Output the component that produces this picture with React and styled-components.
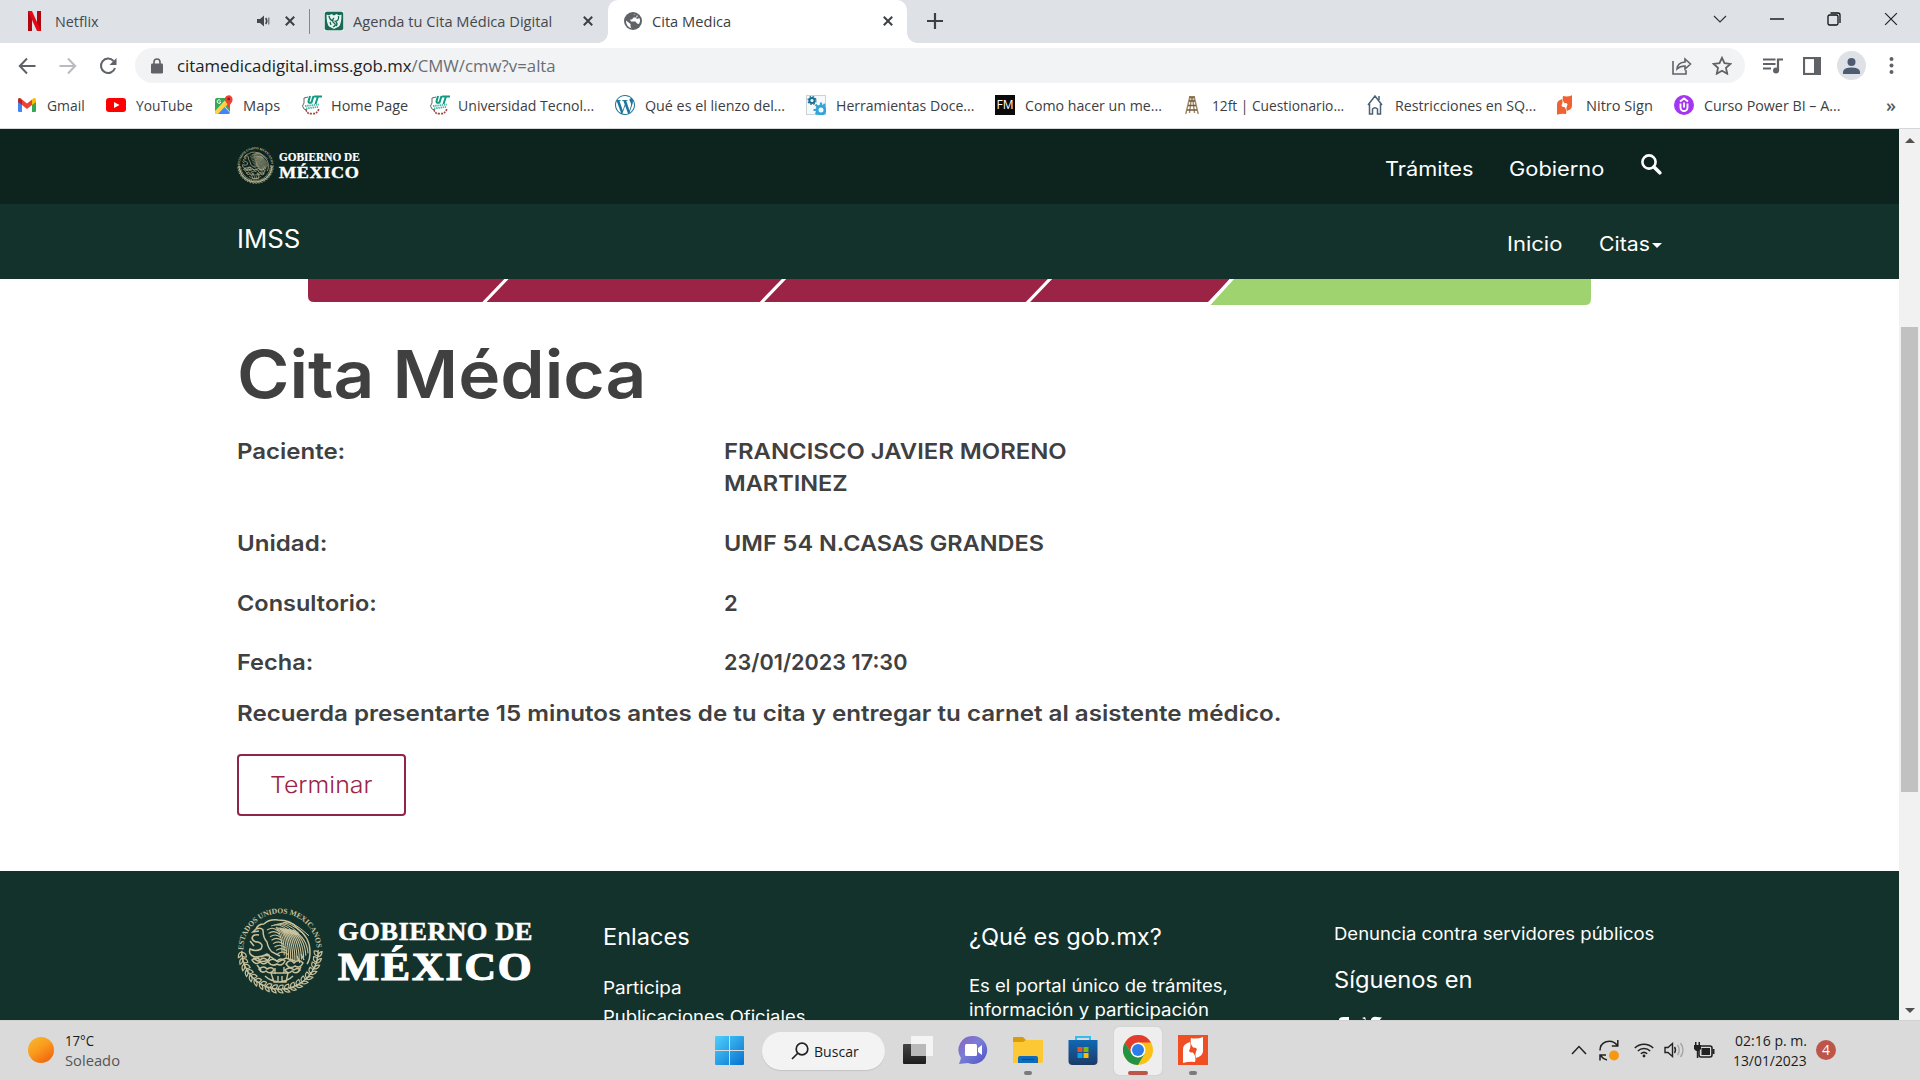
import React, { useLayoutEffect, useRef, useState } from 'react';
import styled, { createGlobalStyle } from 'styled-components';
import { SiWordpress } from 'react-icons/si';

const UI = '"Open Sans", "Noto Sans", sans-serif';
const BODY = 'Inter, "Open Sans", sans-serif';
const SERIF = '"Liberation Serif", serif';

const GlobalStyle = createGlobalStyle`
  * { box-sizing: border-box; }
  body { margin: 0; overflow: hidden; background: #fff; font-family: ${BODY}; }
  svg { display: block; flex: none; }
`;

/* ---------- text that fills a given measure ---------- */
const Measure = styled.span`
  display: block;
  flex: none;
  width: ${(p) => p.$w}px;
  margin-left: ${(p) => p.$ml || 0}px;
  white-space: nowrap;
`;
const Run = styled.span`
  display: block;
  width: max-content;
  transform-origin: 0 50%;
`;
function Fit({ w, ml, children }) {
  const ref = useRef(null);
  const [k, setK] = useState(1);
  useLayoutEffect(() => {
    setK(w / ref.current.offsetWidth);
  }, [w]);
  return (
    <Measure $w={w} $ml={ml}>
      <Run ref={ref} style={{ transform: `scaleX(${k})` }}>{children}</Run>
    </Measure>
  );
}

/* ---------- window ---------- */
const Screen = styled.div`
  width: 1920px;
  height: 1080px;
  display: flex;
  flex-direction: column;
  overflow: hidden;
`;
const Slot = styled.span`
  display: flex;
  flex: none;
  margin-left: ${(p) => p.$ml || 0}px;
`;

/* ---------- tab strip ---------- */
const TabStrip = styled.div`
  height: 43px;
  flex: none;
  display: flex;
  background: #dee1e6;
  font: 15px/41px ${UI};
  color: #45494d;
`;
const Tab = styled.div`
  width: ${(p) => p.$w}px;
  height: 43px;
  display: flex;
  align-items: center;
  padding: 0 0 1px ${(p) => p.$pl}px;
`;
const ActiveTab = styled(Tab)`
  position: relative;
  background: #fff;
  border-radius: 10px 10px 0 0;
  color: #3c4043;
  &::before, &::after {
    content: '';
    position: absolute;
    bottom: 0;
    width: 10px;
    height: 10px;
  }
  &::before { left: -10px; background: radial-gradient(circle at 0 0, transparent 9.5px, #fff 10px); }
  &::after { right: -10px; background: radial-gradient(circle at 100% 0, transparent 9.5px, #fff 10px); }
`;
const TabDivider = styled.i`
  width: 1px;
  height: 25px;
  margin-left: 14px;
  background: #85888c;
`;
const WindowButtons = styled.div`
  display: flex;
  align-items: center;
  height: 37px;
  margin-left: auto;
  padding-right: 22px;
  gap: 43px;
`;

/* ---------- toolbar ---------- */
const Toolbar = styled.div`
  height: 45px;
  flex: none;
  display: flex;
  align-items: center;
  padding: 0 0 0 18px;
  background: #fff;
`;
const Omnibox = styled.div`
  width: 1610px;
  height: 35px;
  margin-left: 18px;
  border-radius: 18px;
  background: #f1f3f4;
  display: flex;
  align-items: center;
  padding-left: 16px;
  font: 17px/35px ${UI};
  color: #202124;
`;
const UrlPath = styled.span`color: #6a6e73;`;
const Avatar = styled.span`
  width: 29px;
  height: 29px;
  margin-left: 16px;
  border-radius: 50%;
  background: #dee1e6;
  display: grid;
  place-items: center;
`;
const Bookmarks = styled.div`
  height: 41px;
  flex: none;
  display: flex;
  align-items: center;
  padding: 0 0 6px 18px;
  background: #fff;
  border-bottom: 1px solid #d4d7da;
  font: 15px/23px ${UI};
  color: #3c4043;
`;
const Bookmark = styled.div`
  display: flex;
  flex: none;
  align-items: center;
  width: ${(p) => p.$w}px;
`;
const BookmarkIcon = styled.span`
  width: ${(p) => p.$w || 30}px;
  flex: none;
  display: flex;
`;
const FmBadge = styled.span`
  width: 20px;
  height: 20px;
  background: #0b0b0b;
  color: #fff;
  display: grid;
  place-items: center;
  font: 500 12px/20px ${UI};
`;
const Overflow = styled.span`
  margin-left: 19px;
  font: 600 18px/20px ${UI};
  color: #55595e;
`;

/* ---------- page ---------- */
const Viewport = styled.div`
  height: 891px;
  flex: none;
  display: flex;
  overflow: hidden;
`;
const Page = styled.div`
  width: 1899px;
  display: flex;
  flex-direction: column;
`;
const Band = styled.div`
  height: 75px;
  flex: none;
  display: flex;
  padding: 0 237px 0 237px;
  background: ${(p) => p.$bg};
  color: #fff;
`;
const HeaderLogo = styled.div`
  display: flex;
  gap: 5px;
  margin-top: 18px;
`;
const HeaderWords = styled.div`
  font: bold 12px/13px ${SERIF};
  padding-top: 4px;
  -webkit-text-stroke: 0.2px #fff;
  > :last-child { font-size: 17.5px; line-height: 20px; margin-top: -2px; letter-spacing: 0.6px; -webkit-text-stroke: 0.4px #fff; }
`;
const SiteName = styled.div`
  font: 400 25px/71px ${BODY};
`;
const Nav = styled.nav`
  display: flex;
  margin-left: auto;
  font: 400 20px/81px ${BODY};
`;
const SearchSlot = styled.span`
  padding-top: 25px;
  margin-left: 37px;
`;
const Caret = styled.i`
  width: 0;
  height: 0;
  margin: 39px 0 0 2px;
  border: 5px solid transparent;
  border-top-color: #fff;
  border-bottom: 0;
`;
const Steps = styled.div`
  height: 26px;
  margin-left: 308px;
`;
const Content = styled.main`
  height: 566px;
  flex: none;
  padding: 29px 0 0 237px;
  color: #404041;
  font: 560 22px/32px ${BODY};
`;
const Title = styled.h1`
  margin: 0 0 21px;
  font: 580 66px/80px ${BODY};
`;
const DataRow = styled.div`
  display: grid;
  grid-template-columns: 487px 1fr;
  margin-bottom: ${(p) => p.$gap}px;
`;
const EndButton = styled.button`
  width: 169px;
  height: 62px;
  margin-top: 25px;
  padding: 0 0 0 31px;
  border: 2px solid #8f2547;
  border-radius: 4px;
  background: #fff;
  color: #9d2449;
  font: 300 22.5px/58px ${BODY};
  text-align: left;
`;
const Footer = styled.footer`
  height: 149px;
  flex: none;
  display: flex;
  overflow: hidden;
  padding-left: 237px;
  background: #13322b;
  color: #fff;
`;
const FooterLogo = styled.div`
  width: 366px;
  display: flex;
  padding-top: 37px;
  gap: 15px;
`;
const FooterWords = styled.div`
  padding-top: 12px;
  font: bold 25px/24px ${SERIF};
  letter-spacing: 0.5px;
  -webkit-text-stroke: 0.5px #fff;
  > :last-child { font-size: 40px; line-height: 42px; margin-top: 2px; letter-spacing: 1.8px; -webkit-text-stroke: 1.2px #fff; }
`;
const FooterColumn = styled.div`
  width: ${(p) => p.$w}px;
  padding-top: ${(p) => p.$top}px;
`;
const FooterHeading = styled.div`
  padding-top: ${(p) => p.$pt || 0}px;
  font: 400 22.5px/30px ${BODY};
  margin-bottom: ${(p) => p.$mb || 0}px;
`;
const FooterText = styled.div`
  font: 400 17px/${(p) => p.$lh}px ${BODY};
`;
const Social = styled.div`
  padding-top: 21px;
`;
const Scrollbar = styled.div`
  width: 21px;
  height: 891px;
  background: #f1f1f1;
  display: flex;
  flex-direction: column;
  align-items: center;
  padding-top: 9px;
`;
const ScrollThumb = styled.div`
  width: 17px;
  height: 465px;
  margin-top: 184px;
  background: #c1c1c1;
`;
const ScrollArrow = styled.i`
  width: 0;
  height: 0;
  border: 5px solid transparent;
  ${(p) => (p.$up ? 'border-top: 0; border-bottom-color: #505050;' : 'border-bottom: 0; border-top-color: #505050; margin-top: 216px;')}
`;

/* ---------- taskbar ---------- */
const Taskbar = styled.div`
  height: 60px;
  flex: none;
  display: flex;
  align-items: center;
  background: #dadada;
  border-top: 1px solid #d2d2d2;
  color: #1b1b1b;
  font: 15px/20px ${UI};
`;
const Weather = styled.div`
  width: 715px;
  padding: 0 0 1px 28px;
  display: flex;
  align-items: center;
  gap: 11px;
`;
const Sun = styled.i`
  width: 26px;
  height: 26px;
  border-radius: 50%;
  background: linear-gradient(145deg, #f6b52d 10%, #fa9a1d 45%, #f0640d 90%);
`;
const Condition = styled.div`color: #555;`;
const Search = styled.div`
  width: 123px;
  height: 38px;
  margin-left: 18px;
  padding-left: 29px;
  border-radius: 19px;
  background: #f3f3f3;
  box-shadow: 0 1px 1px #c4c4c4;
  display: flex;
  align-items: center;
  gap: 5px;
`;
const Apps = styled.div`
  display: flex;
  margin-left: 9px;
  gap: 7px;
`;
const TaskApp = styled.div`
  width: 48px;
  height: 48px;
  border-radius: 5px;
  display: flex;
  flex-direction: column;
  align-items: center;
  padding-top: 8px;
  background: ${(p) => (p.$active ? '#eeeeee' : 'transparent')};
  box-shadow: ${(p) => (p.$active ? '0 0 1px #aaa' : 'none')};
`;
const Running = styled.i`
  width: ${(p) => (p.$active ? 20 : 8)}px;
  height: 4px;
  margin-top: 6px;
  border-radius: 2px;
  background: ${(p) => (p.$active ? '#bd5548' : '#7b7b7b')};
`;
const Tray = styled.div`
  display: flex;
  align-items: center;
  margin-left: auto;
  padding: 0 84px 1px 0;
`;
const Clock = styled.div`
  margin-left: 18px;
  width: 74px;
  display: flex;
  flex-direction: column;
  align-items: flex-end;
`;
const Badge = styled.span`
  width: 20px;
  height: 20px;
  margin-left: 9px;
  border-radius: 50%;
  background: #bd5548;
  color: #fff;
  font: 14px/20px ${UI};
  text-align: center;
`;

/* ---------- drawings ---------- */
const CloseX = ({ s = 10, c = '#3c4043', t = 2 }) => (
  <svg width={s} height={s} viewBox="0 0 10 10"><path d="M.8.8l8.4 8.4M9.2.8L.8 9.2" stroke={c} strokeWidth={(t * 10) / s} /></svg>
);
const NetflixN = () => (
  <svg width="13" height="20" viewBox="0 0 13 20">
    <path d="M0 0h4v20H0zM9 0h4v20H9z" fill="#b1060f" />
    <path d="M0 0h4l9 20H9z" fill="#e50914" />
  </svg>
);
const Speaker = () => (
  <svg width="13" height="12" viewBox="0 0 13 12">
    <path d="M0 4h3l4-3.500v11L3 8H0z" fill="#45494d" />
    <path d="M8.700 3q2.200 3 0 6" stroke="#45494d" strokeWidth="1.600" fill="none" /><path d="M11.800 2.500v7" stroke="#6b6e72" strokeWidth="1.200" />
  </svg>
);
const ImssIcon = () => (
  <svg width="20" height="20" viewBox="0 0 20 20">
    <rect width="20" height="20" fill="#e4efeb" /><rect x=".8" y=".8" width="18.400" height="18.400" rx="2" fill="#176a55" />
    <path d="M2.500 3.500q3 1.500 5-.5l2.500 1.500L12.500 3q2 2 5 .5 0 9-2.500 12l-5 2.500-5-2.500q-2.500-3-2.500-12z" fill="#e8f3ef" />
    <path d="M5 5q1 5 4.500 4.500M14.500 5q1 5-4 5.500M10 7q-3 3 0 5t-1 4M12 11q2 2 0 4M6 11l1 3" stroke="#176a55" strokeWidth="1.300" fill="none" />
  </svg>
);
const Globe = () => (
  <svg width="18" height="18" viewBox="0 0 18 18">
    <circle cx="9" cy="9" r="9" fill="#5f6368" />
    <path d="M2 8.500l4.500 3.500v2q0 2 1.500 2.500A7.500 7.500 0 0 1 2 8.500zM8 3q3-1.500 5 .5l-1 2H9.500L8 7.500H6l1 2h4.500l1.500 2 2 .5q2-3 .5-6L13 7l-1-1 2-2q-3-3-6-1z" fill="#fff" />
  </svg>
);
const Lock = () => (
  <svg width="12" height="16" viewBox="0 0 12 16">
    <rect y="5.500" width="12" height="10" rx="1.300" fill="#5f6368" /><path d="M3 6.500V4a3 3 0 0 1 6 0v2.500" fill="none" stroke="#5f6368" strokeWidth="1.600" />
  </svg>
);
const ForwardSvg = styled.svg`transform: scaleX(-1);`;
const arrowPath = 'M17.500 9H2.500M9 1.500L1.800 9 9 16.500';
const BackArrow = () => (
  <svg width="18" height="18" viewBox="0 0 18 18"><path d={arrowPath} fill="none" stroke="#5f6368" strokeWidth="2" /></svg>
);
const ForwardArrow = () => (
  <ForwardSvg width="18" height="18" viewBox="0 0 18 18"><path d={arrowPath} fill="none" stroke="#b9bbbe" strokeWidth="2" /></ForwardSvg>
);
const Reload = () => (
  <svg width="18" height="18" viewBox="0 0 18 18">
    <path d="M14.500 4A7.200 7.200 0 1 0 16 11" fill="none" stroke="#5f6368" strokeWidth="2" /><path d="M17.500 1v7h-7z" fill="#5f6368" />
  </svg>
);
const Share = () => (
  <svg width="20" height="18" viewBox="0 0 20 18" fill="none" stroke="#5f6368" strokeWidth="1.600">
    <path d="M1 4v13h13v-4" /><path d="M5 12q.5-6.500 8-7V2l5.500 5L13 12V9q-5 0-8 3z" />
  </svg>
);
const Star = () => (
  <svg width="20" height="19" viewBox="0 0 20 19"><path d="M10 1.800l2.500 5.400 5.900.7-4.400 4 1.200 5.800L10 14.800l-5.200 2.900L6 11.900l-4.400-4 5.900-.7z" fill="none" stroke="#5f6368" strokeWidth="1.800" /></svg>
);
const Queue = () => (
  <svg width="20" height="16" viewBox="0 0 20 16">
    <path d="M0 1.500h12.500M0 6h12.500M0 10.500h8" stroke="#5f6368" strokeWidth="2" /><circle cx="13" cy="12.500" r="3" fill="#5f6368" />
    <path d="M15 13V1.500h5" stroke="#5f6368" strokeWidth="2.200" fill="none" />
  </svg>
);
const Panel = () => (
  <svg width="18" height="18" viewBox="0 0 18 18"><rect x="1" y="1" width="16" height="16" fill="none" stroke="#5f6368" strokeWidth="2.200" /><path d="M11 1h6v16h-6z" fill="#5f6368" /></svg>
);
const Gmail = () => (
  <svg width="18" height="14" viewBox="0 0 18 14">
    <path d="M0 2v11q0 1 1 1h3V4.500z" fill="#4285f4" /><path d="M18 2v11q0 1-1 1h-3V4.500z" fill="#34a853" />
    <path d="M4 1.500l5 4 5-4V7l-5 4-5-4z" fill="#ea4335" /><path d="M0 2Q0-1 3 .5l1 1V7L0 4z" fill="#c5221f" /><path d="M18 2q0-3-3-1.500l-1 1V7l4-3z" fill="#fbbc04" />
  </svg>
);
const YouTube = () => (
  <svg width="20" height="14" viewBox="0 0 20 14"><rect width="20" height="14" rx="3" fill="#f00" /><path d="M8 4l5.500 3L8 10z" fill="#fff" /></svg>
);
const Maps = () => (
  <svg width="18" height="20" viewBox="0 0 18 20">
    <defs><clipPath id="mapSheet"><rect y="3" width="15" height="16" rx="2" /></clipPath></defs>
    <g clipPath="url(#mapSheet)">
      <rect y="3" width="15" height="16" fill="#34a853" />
      <path d="M0 19L9 10l6 7v2z" fill="#dfe4ea" /><path d="M0 16L12 3h3v4L3 19H0z" fill="#fbd24a" /><path d="M3 19l6.500-7 6.500 7z" fill="#4285f4" />
    </g>
    <path d="M13.500 13q-.5-4-3-6.500A3.900 3.900 0 1 1 17.500 5q0 2-2 4-1.500 2-2 4z" fill="#ea4335" /><circle cx="13.700" cy="4" r="1.400" fill="#8c1c13" />
    <path d="M5.500 5.500a1.800 1.800 0 1 0 .3 1.500H4.300" fill="none" stroke="#fff" />
  </svg>
);
const UtIcon = () => (
  <svg width="20" height="20" viewBox="0 0 20 20" fill="none">
    <path d="M8 1L6.500 6.500q0 2 3 1l2-6.500M12 1.500h8M16 1.500L13.500 9" stroke="#0e9a83" strokeWidth="2" />
    <path d="M6 2L2 3v5l-1.500 3L2 14l3 1" stroke="#666" strokeWidth="1" /><path d="M4 14.500q1 5 6 4 5 1 7-5" stroke="#a3453a" strokeWidth="1.600" strokeDasharray="2 1" />
    <path d="M3 11l14-1.500M4 13.500l12-1.500" stroke="#4bb6a4" strokeWidth="1.800" strokeDasharray="1.500 .7" />
  </svg>
);
const GearsIcon = () => (
  <svg width="20" height="20" viewBox="0 0 20 20">
    <rect x=".5" y=".5" width="19" height="19" fill="#f5f9fb" stroke="#c9d3d8" />
    <circle cx="6" cy="5.500" r="2.600" fill="none" stroke="#1c6f92" strokeWidth="2" /><circle cx="6" cy="5.500" r="4" fill="none" stroke="#1c6f92" strokeWidth="1.200" strokeDasharray="1.700 1.450" />
    <circle cx="15" cy="15" r="4" fill="none" stroke="#32a5d8" strokeWidth="3" /><path d="M15 7.500v3M7.500 15h3M9.500 9.500l2.500 2.500M9.500 19l2-1.500M19 9l-1.500 2" stroke="#32a5d8" strokeWidth="2.200" />
  </svg>
);
const Ladder = () => (
  <svg width="14" height="18" viewBox="0 0 14 18" fill="none" stroke="#a08560" strokeWidth="1.400"><path d="M5 0L.8 18M9 0l4.200 18M6.500 1L4.500 17M7.500 1l2 16" /><path d="M4.500 1h5M4 5h6M3 9.500h8M2 14h10" stroke="#6f5b40" /></svg>
);
const House = () => (
  <svg width="16" height="20" viewBox="0 0 16 20" fill="none" stroke="#4a6274" strokeWidth="1.500"><path d="M1 10l7-9 7 9M2.500 9v10h3v-5q2.500-2.500 5 0v5h3V9M12 1v4" /></svg>
);
/* two interlocking leaves, one hanging from the upper right, one rising from the lower left */
const NitroMark = ({ w, h, c }) => (
  <svg width={w} height={h} viewBox="0 0 20 26">
    <path d="M8 1q6 1.500 12-1v14q0 5-7 7-1.500-4 1-9-1-2-4-1.500Q6.500 6 8 1z" fill={c} />
    <path d="M12 25q-6-1-12 1V12q0-5 7-7 1.500 4-1 9 1 2 4 1.500 3.500 4.500 2 9.500z" fill={c} />
  </svg>
);
const UIcon = () => (
  <svg width="20" height="20" viewBox="0 0 20 20"><circle cx="10" cy="10" r="10" fill="#a435f0" /><path d="M6.500 8.500v4a3.500 3.500 0 0 0 7 0v-4M10 7.500v5M6 6.500L10 3.500l4 3" fill="none" stroke="#fff" strokeWidth="1.900" /></svg>
);

const SealSvg = styled.svg`overflow: visible;`;
function Seal({ size }) {
  const gold = '#c9c19b';
  const feathers = Array.from({ length: 13 }, (_, i) => {
    const t = i / 12;
    return `M${39 + t * 17} ${19 + t * 3}Q${46 + t * 24} ${28 + t * 2} ${45 + t * 26} ${45 + Math.sin(t * 3.1) * 9}`;
  }).join('');
  const breast = Array.from({ length: 8 }, (_, i) => `M${30 + i * 1.5} ${22 + i * 3.4}q6-4 11 1`).join('');
  const crown = Array.from({ length: 5 }, (_, i) => `M${34 + i * 3} ${18 - i * 0.8}q8-4 ${18 + i * 2} ${5 + i * 2}`).join('');
  const leaves = Array.from({ length: 19 }, (_, i) => {
    const r = 5 + i * 9.45;
    const a = (r * Math.PI) / 180;
    return { x: 43 + 38 * Math.cos(a), y: 43 + 38 * Math.sin(a), r };
  });
  return (
    <SealSvg width={size} height={size} viewBox="0 0 86 86" fill="none" stroke={gold}>
      <defs><path id={`arc${size}`} d="M6.300 42A36.700 36.700 0 0 1 79.700 42" /></defs>
      <text fill={gold} stroke="none" fontFamily="Liberation Serif" fontWeight="700" fontSize="7.600">
        <textPath href={`#arc${size}`} textLength="113">ESTADOS UNIDOS MEXICANOS</textPath>
      </text>
      {leaves.map((l) => (
        <g key={l.r} transform={`translate(${l.x} ${l.y}) rotate(${l.r})`}>
          <path d="M-4-3q5-1 4.500 4.500Q-4 2-4-3zM4-3q0 5-4 5.500Q0-2 4-3zM0-4.500v8" strokeWidth="1.200" />
        </g>
      ))}
      <path d={feathers} strokeWidth="1.100" />
      <path d={breast} strokeWidth="1.100" />
      <path d={crown} strokeWidth="1" />
      <path d="M27 16q5-5 14-4 13 0 19 8 13 9 13 24 0 8-3 12M27 16q-6 0-8 5 5-2 7 1 0 8 4 12 1 6 5 10l8 4M19 21l-3 3 6-1" strokeWidth="1.500" />
      <path d="M22 27q-6-1-7 3 1 4 6 4 6 2 3 7-5 3-11 0-2 6 5 8 7 0 12-3 5 2 1 6-8 4-15-2M13 33l4 5M24 49q6-3 10 0l7 5 8-4 9 3" strokeWidth="1.500" />
      <path d="M15 52q5-4 8 0 4-4 8 1-4 5-8 1-4 4-8-2zM31 54q4-5 9-1 4-4 8 0-3 6-8 3-5 3-9-2zM49 56q4-6 8-1 5-5 9 0-3 6-8 3-5 4-9-2zM22 61q5-4 8 0 5-3 7 1-4 5-8 1-4 3-7-2zM48 62q5-4 9 0 4-3 6 0-4 5-8 1-4 4-7-1z" strokeWidth="1.500" />
      <path d="M34 65h17l-2 9H37zM38 60v6M47 59v6M41 68v5M45 68v5M28 68q5 5 14 6 9-1 14-6M60 48l3 7M64 46l3 6M20 57l4 5M64 59l-3 5" strokeWidth="1.400" />
    </SealSvg>
  );
}

const StepBar = () => (
  <svg width="1284" height="26" viewBox="308 279 1284 26">
    <path d="M308 279h922l-22 23H314q-6 0-6-6z" fill="#9b2345" />
    <path d="M507.500 278l-25 26M785 278l-25 26M1051 278l-25 26" stroke="#fff" strokeWidth="3.200" />
    <path d="M1234 279h357v20q0 6-6 6h-375z" fill="#9fd36f" />
    <path d="M1232.500 278l-25 28" stroke="#fff" strokeWidth="3" />
  </svg>
);
const Magnifier = () => (
  <svg width="21" height="21" viewBox="0 0 21 21" fill="none" stroke="#fff"><circle cx="8" cy="8" r="6.600" strokeWidth="2.600" /><path d="M13 13l5.800 5.800" strokeWidth="3.600" strokeLinecap="round" /></svg>
);
const WindowsLogo = () => (
  <svg width="29" height="29" viewBox="0 0 29 29">
    <defs><linearGradient id="win" x2="1" y2="1"><stop stopColor="#4fd0fd" /><stop offset="1" stopColor="#0671cf" /></linearGradient></defs>
    <path d="M1 0h13v14H0V1q0-1 1-1zM15 0h13q1 0 1 1v13H15zM0 15h14v14H1q-1 0-1-1zM15 15h14v13q0 1-1 1H15z" fill="url(#win)" />
  </svg>
);
const TaskView = () => (
  <svg width="30" height="30" viewBox="0 0 30 30"><defs><linearGradient id="tv" x2="0" y2="1"><stop stopColor="#444" /><stop offset="1" stopColor="#1e1e1e" /></linearGradient></defs>
    <rect y="9" width="23" height="20" rx="1" fill="url(#tv)" /><rect x="8" y="1" width="22" height="20" rx="1" fill="#f4f4f4" /><path d="M8 9h15v12H8z" fill="#b9b9b9" /></svg>
);
const Chat = () => (
  <svg width="30" height="30" viewBox="0 0 30 30"><defs><linearGradient id="ch" x2="1" y2="1"><stop stopColor="#8c5ec0" /><stop offset=".45" stopColor="#7a7fd8" /><stop offset="1" stopColor="#4e50c4" /></linearGradient></defs>
    <path d="M15 1a14 14 0 1 1-5 27l-9 1 2-6A14 14 0 0 1 15 1z" fill="url(#ch)" /><rect x="7" y="9" width="12" height="12" rx="1.500" fill="#fff" /><path d="M20 13l4-3v10l-4-3z" fill="#fff" /></svg>
);
const Folder = () => (
  <svg width="30" height="30" viewBox="0 0 30 30"><path d="M0 3q0-1 1-1h9l3 3h16q1 0 1 2v6H0z" fill="#d99a0b" /><path d="M0 7h10l3-2h17v21q0 2-2 2H0z" fill="#fcc934" /><path d="M5 28v-5q0-2 2-2h16q2 0 2 2v5z" fill="#0f6cbd" /><path d="M9 24.500h12" stroke="#0a4b8c" strokeWidth="1.200" /></svg>
);
const Store = () => (
  <svg width="30" height="30" viewBox="0 0 30 30"><defs><linearGradient id="st" x2="0" y2="1"><stop stopColor="#0f68b4" /><stop offset="1" stopColor="#1d3a66" /></linearGradient></defs>
    <path d="M8 6V2h14v4" fill="none" stroke="#35bdf0" strokeWidth="2" /><path d="M.5 5h29v21q0 4-4 4h-21q-4 0-4-4z" fill="url(#st)" />
    <path d="M9.500 12h5v5h-5z" fill="#f25022" /><path d="M15.500 12h5v5h-5z" fill="#7fba00" /><path d="M9.500 18h5v5h-5z" fill="#00a4ef" /><path d="M15.500 18h5v5h-5z" fill="#ffb900" /></svg>
);
const Chrome = () => (
  <svg width="30" height="30" viewBox="0 0 30 30"><circle cx="15" cy="15" r="15" fill="#fbc116" /><path d="M2 7.500A15 15 0 0 1 28 7.500L15 7.500 8.500 18.700z" fill="#e33b2e" /><path d="M2 7.500A15 15 0 0 0 15 30l6.500-11.200L15 22.500 8.500 18.700z" fill="#229342" /><circle cx="15" cy="15" r="7.500" fill="#fff" /><circle cx="15" cy="15" r="6" fill="#2b7de9" /></svg>
);
const NitroTile = styled.span`
  width: 30px;
  height: 30px;
  background: #f04e23;
  display: grid;
  place-items: center;
`;
const Sync = () => (
  <svg width="20" height="21" viewBox="0 0 20 21" fill="none" stroke="#222" strokeWidth="1.500">
    <path d="M1 10.500Q1 4 7 1.800 14-.3 18.300 5.500M18.800 0v6h-6M8 20q-4-1-6.500-4.500M1 20.500V15h6" /><circle cx="15" cy="15.500" r="5" fill="#f7980f" stroke="none" />
  </svg>
);

const bookmarks = [
  { icon: <Gmail />, text: 'Gmail', w: 88, tw: 38, iw: 29 },
  { icon: <YouTube />, text: 'YouTube', w: 109, tw: 57 },
  { icon: <Maps />, text: 'Maps', w: 87, tw: 37, iw: 28 },
  { icon: <UtIcon />, text: 'Home Page', w: 128, tw: 77, iw: 29 },
  { icon: <UtIcon />, text: 'Universidad Tecnol...', w: 185, tw: 136, iw: 28 },
  { icon: <SiWordpress size={20} color="#21759b" />, text: 'Qué es el lienzo del...', w: 191, tw: 140 },
  { icon: <GearsIcon />, text: 'Herramientas Doce...', w: 189, tw: 138 },
  { icon: <FmBadge>FM</FmBadge>, text: 'Como hacer un me...', w: 190, tw: 137 },
  { icon: <Ladder />, text: '12ft | Cuestionario...', w: 182, tw: 132, iw: 27 },
  { icon: <House />, text: 'Restricciones en SQ...', w: 190, tw: 141, iw: 28 },
  { icon: <NitroMark w={15} h={20} c="#ee6331" />, text: 'Nitro Sign', w: 117, tw: 67, iw: 29 },
  { icon: <UIcon />, text: 'Curso Power BI – A...', w: 193, tw: 136 },
];

const appointment = [
  { label: 'Unidad:', lw: 91, value: 'UMF 54 N.CASAS GRANDES', vw: 320, gap: 28 },
  { label: 'Consultorio:', lw: 140, value: '2', vw: 14, gap: 27 },
  { label: 'Fecha:', lw: 76, value: '23/01/2023 17:30', vw: 183, gap: 19 },
];

export default function App() {
  return (
    <Screen>
      <GlobalStyle />
      <TabStrip>
        <Tab $w={311} $pl={28}>
          <NetflixN /><Fit w={44} ml={14}>Netflix</Fit>
          <Slot $ml={158}><Speaker /></Slot><Slot $ml={15}><CloseX /></Slot><TabDivider />
        </Tab>
        <Tab $w={297} $pl={13}>
          <ImssIcon /><Fit w={199} ml={9}>Agenda tu Cita Médica Digital</Fit><Slot $ml={31}><CloseX /></Slot>
        </Tab>
        <ActiveTab $w={299} $pl={16}>
          <Globe /><Fit w={79} ml={10}>Cita Medica</Fit><Slot $ml={152}><CloseX /></Slot>
        </ActiveTab>
        <Tab $w={60} $pl={20}>
          <svg width="16" height="16" viewBox="0 0 16 16"><path d="M8 0v16M0 8h16" stroke="#3c4043" strokeWidth="2.200" /></svg>
        </Tab>
        <WindowButtons>
          <svg width="14" height="8" viewBox="0 0 14 8"><path d="M1 1l6 6 6-6" fill="none" stroke="#333" strokeWidth="1.200" /></svg>
          <svg width="14" height="2" viewBox="0 0 14 2"><path d="M0 1h14" stroke="#111" strokeWidth="1.400" /></svg>
          <svg width="14" height="14" viewBox="0 0 14 14" fill="none" stroke="#111" strokeWidth="1.300"><rect x="1" y="3" width="10" height="10" rx="1.500" /><path d="M3.500 1H11q2 0 2 2v8" /></svg>
          <CloseX s={14} c="#222" t={1.2} />
        </WindowButtons>
      </TabStrip>
      <Toolbar>
        <BackArrow />
        <Slot $ml={23}><ForwardArrow /></Slot>
        <Slot $ml={22}><Reload /></Slot>
        <Omnibox>
          <Lock />
          <Fit w={379} ml={14}>citamedicadigital.imss.gob.mx<UrlPath>/CMW/cmw?v=alta</UrlPath></Fit>
          <Slot $ml={1116}><Share /></Slot><Slot $ml={20}><Star /></Slot>
        </Omnibox>
        <Slot $ml={18}><Queue /></Slot><Slot $ml={20}><Panel /></Slot>
        <Avatar><svg width="17" height="16" viewBox="0 0 17 16" fill="#4d5b73"><circle cx="8.500" cy="4" r="4" /><path d="M0 16v-2.500q1-4 8.500-4t8.500 4V16z" /></svg></Avatar>
        <Slot $ml={23}><svg width="5" height="17" viewBox="0 0 5 17" fill="#5f6368"><circle cx="2.500" cy="2" r="2" /><circle cx="2.500" cy="8.500" r="2" /><circle cx="2.500" cy="15" r="2" /></svg></Slot>
      </Toolbar>
      <Bookmarks>
        {bookmarks.map((b) => (
          <Bookmark key={b.text} $w={b.w}><BookmarkIcon $w={b.iw}>{b.icon}</BookmarkIcon><Fit w={b.tw}>{b.text}</Fit></Bookmark>
        ))}
        <Overflow>»</Overflow>
      </Bookmarks>

      <Viewport>
        <Page>
          <Band $bg="#0c231e">
            <HeaderLogo>
              <Seal size={37} />
              <HeaderWords><Fit w={81}>GOBIERNO DE</Fit><Fit w={81}>MÉXICO</Fit></HeaderWords>
            </HeaderLogo>
            <Nav>
              <Fit w={88}>Trámites</Fit><Fit w={95} ml={36}>Gobierno</Fit>
              <SearchSlot><Magnifier /></SearchSlot>
            </Nav>
          </Band>
          <Band $bg="#13322b">
            <SiteName><Fit w={63}>IMSS</Fit></SiteName>
            <Nav><Fit w={55}>Inicio</Fit><Fit w={51} ml={37}>Citas</Fit><Caret /></Nav>
          </Band>
          <Steps><StepBar /></Steps>
          <Content>
            <Title><Fit w={409}>Cita Médica</Fit></Title>
            <DataRow $gap={28}>
              <Fit w={108}>Paciente:</Fit>
              <div><Fit w={343}>FRANCISCO JAVIER MORENO</Fit><Fit w={124}>MARTINEZ</Fit></div>
            </DataRow>
            {appointment.map((r) => (
              <DataRow key={r.label} $gap={r.gap}><Fit w={r.lw}>{r.label}</Fit><Fit w={r.vw}>{r.value}</Fit></DataRow>
            ))}
            <Fit w={1045}>Recuerda presentarte 15 minutos antes de tu cita y entregar tu carnet al asistente médico.</Fit>
            <EndButton><Fit w={102}>Terminar</Fit></EndButton>
          </Content>
          <Footer>
            <FooterLogo>
              <Seal size={86} />
              <FooterWords><Fit w={195}>GOBIERNO DE</Fit><Fit w={196}>MÉXICO</Fit></FooterWords>
            </FooterLogo>
            <FooterColumn $w={366} $top={51}>
              <FooterHeading $mb={22}><Fit w={87}>Enlaces</Fit></FooterHeading>
              <FooterText $lh={29}><Fit w={79}>Participa</Fit><Fit w={203}>Publicaciones Oficiales</Fit></FooterText>
            </FooterColumn>
            <FooterColumn $w={365} $top={51}>
              <FooterHeading $mb={22}><Fit w={193}>¿Qué es gob.mx?</Fit></FooterHeading>
              <FooterText $lh={24}><Fit w={259}>Es el portal único de trámites,</Fit><Fit w={240}>información y participación</Fit></FooterText>
            </FooterColumn>
            <FooterColumn $w={400} $top={51}>
              <FooterText $lh={24}><Fit w={320}>Denuncia contra servidores públicos</Fit></FooterText>
              <FooterHeading $pt={19}><Fit w={139}>Síguenos en</Fit></FooterHeading>
              <Social>
                <svg width="60" height="20" viewBox="0 0 60 20" fill="#fff"><path d="M5 6V3.500Q5 1 9.500 1H15v4H9v2zM28 2l3-1 1 3zM37 3q2-3 6-2l5 .5-2 2q0 9-9 10z" /></svg>
              </Social>
            </FooterColumn>
          </Footer>
        </Page>
        <Scrollbar><ScrollArrow $up /><ScrollThumb /><ScrollArrow /></Scrollbar>
      </Viewport>

      <Taskbar>
        <Weather><Sun /><div><Fit w={29}>17°C</Fit><Condition><Fit w={55}>Soleado</Fit></Condition></div></Weather>
        <WindowsLogo />
        <Search>
          <svg width="18" height="18" viewBox="0 0 18 18" fill="none" stroke="#222" strokeWidth="1.700"><circle cx="11" cy="7" r="5.800" /><path d="M7 11l-6 6" /></svg>
          <Fit w={45}>Buscar</Fit>
        </Search>
        <Apps>
          <TaskApp><TaskView /></TaskApp>
          <TaskApp><Chat /></TaskApp>
          <TaskApp><Folder /><Running /></TaskApp>
          <TaskApp><Store /></TaskApp>
          <TaskApp $active><Chrome /><Running $active /></TaskApp>
          <TaskApp><NitroTile><NitroMark w={20} h={26} c="#fff" /></NitroTile><Running /></TaskApp>
        </Apps>
        <Tray>
          <svg width="16" height="10" viewBox="0 0 16 10"><path d="M1 9l7-7.500L15 9" fill="none" stroke="#222" strokeWidth="1.500" /></svg>
          <Slot $ml={12}><Sync /></Slot>
          <Slot $ml={15}><svg width="20" height="16" viewBox="0 0 20 16" fill="none" stroke="#222" strokeWidth="1.500"><path d="M.8 6a13 13 0 0 1 18.400 0M3.800 9a8.800 8.800 0 0 1 12.400 0M6.800 11.800a4.800 4.800 0 0 1 6.400 0" /><circle cx="10" cy="14" r="1.400" fill="#222" stroke="none" /></svg></Slot>
          <Slot $ml={10}><svg width="20" height="16" viewBox="0 0 20 16" fill="none" stroke="#222" strokeWidth="1.400"><path d="M1 5.500h3l4.500-4v13l-4.500-4H1z" /><path d="M10.500 5q2 3 0 6" /><path d="M13.500 3q3.500 5 0 10M16.500 1q5 7 0 14" stroke="#a5a5a5" /></svg></Slot>
          <Slot $ml={10}><svg width="21" height="17" viewBox="0 0 21 17"><rect x="5" y="4" width="13" height="11" rx="2" fill="none" stroke="#222" strokeWidth="1.600" /><path d="M7.500 6H16v7H7.500zM18.500 7h2v5h-2zM0 3h7v4l-2 2H2L0 7zM1 0h1.500v3H1zM4.500 0H6v3H4.500zM2.800 9h1.500v7H2.800z" fill="#222" /></svg></Slot>
          <Clock><Fit w={72}>02:16 p. m.</Fit><Fit w={74}>13/01/2023</Fit></Clock>
          <Badge>4</Badge>
        </Tray>
      </Taskbar>
    </Screen>
  );
}
